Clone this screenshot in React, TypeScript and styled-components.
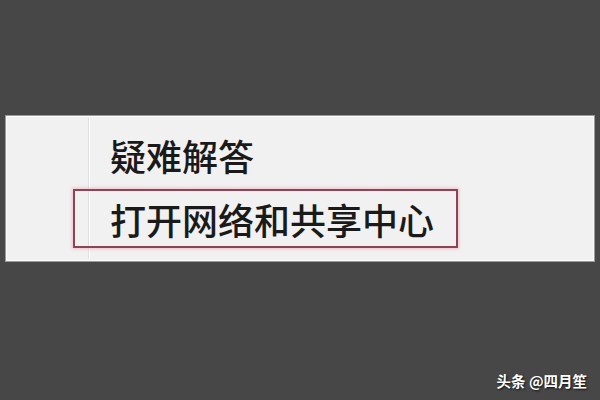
import React from "react";
import styled, { createGlobalStyle } from "styled-components";

const Global = createGlobalStyle`
  html, body { margin: 0; padding: 0; }
  body { background: #474747; }
`;

const Page = styled.div`
  position: relative;
  width: 600px;
  height: 400px;
  box-sizing: border-box;
  padding: 115px 5px 0 5px;
  background: #474747;
  font-family: "Noto Sans CJK SC", "Noto Sans", sans-serif;
  overflow: hidden;
`;

const Menu = styled.div`
  position: relative;
  box-sizing: border-box;
  height: 147px;
  border: 1px solid #9a9a9a;
  background: #f1f1f1;
  box-shadow: inset 1px 1px 0 #fbfbfb, inset -1px -1px 0 #fbfbfb;
  padding-top: 4px;
  display: flex;
  flex-direction: column;
  &::before {
    content: "";
    position: absolute;
    left: 82px;
    top: 2px;
    bottom: 2px;
    width: 1px;
    background: #e0e0e0;
    box-shadow: 1px 0 0 #ffffff;
  }
`;

const Item = styled.div`
  position: relative;
  display: flex;
  align-items: center;
  height: 69px;
  padding-left: 104px;
  font-size: 36px;
  font-weight: 500;
  color: #1a1a1a;
  line-height: 1;
`;

const Highlight = styled.div`
  position: relative;
  display: flex;
  align-items: center;
  box-sizing: border-box;
  margin-left: 67px;
  width: 385px;
  height: 59px;
  padding-left: 35px;
  border: 2px solid #8a4656;
  box-shadow: 0 0 3px 1px rgba(240, 170, 185, 0.7);
  font-size: 36px;
  font-weight: 500;
  color: #1a1a1a;
  line-height: 1;
`;

const Watermark = styled.div`
  position: absolute;
  right: 13px;
  top: 370px;
  font-size: 14.5px;
  font-weight: 700;
  color: #ffffff;
  text-shadow: 1px 1px 2px rgba(0, 0, 0, 0.8);
  font-family: "Noto Sans CJK SC", "Noto Sans", sans-serif;
`;

export default function App() {
  return (
    <>
      <Global />
      <Page>
        <Menu>
          <Item>疑难解答</Item>
          <Highlight>打开网络和共享中心</Highlight>
        </Menu>
        <Watermark>头条 @四月笙</Watermark>
      </Page>
    </>
  );
}
